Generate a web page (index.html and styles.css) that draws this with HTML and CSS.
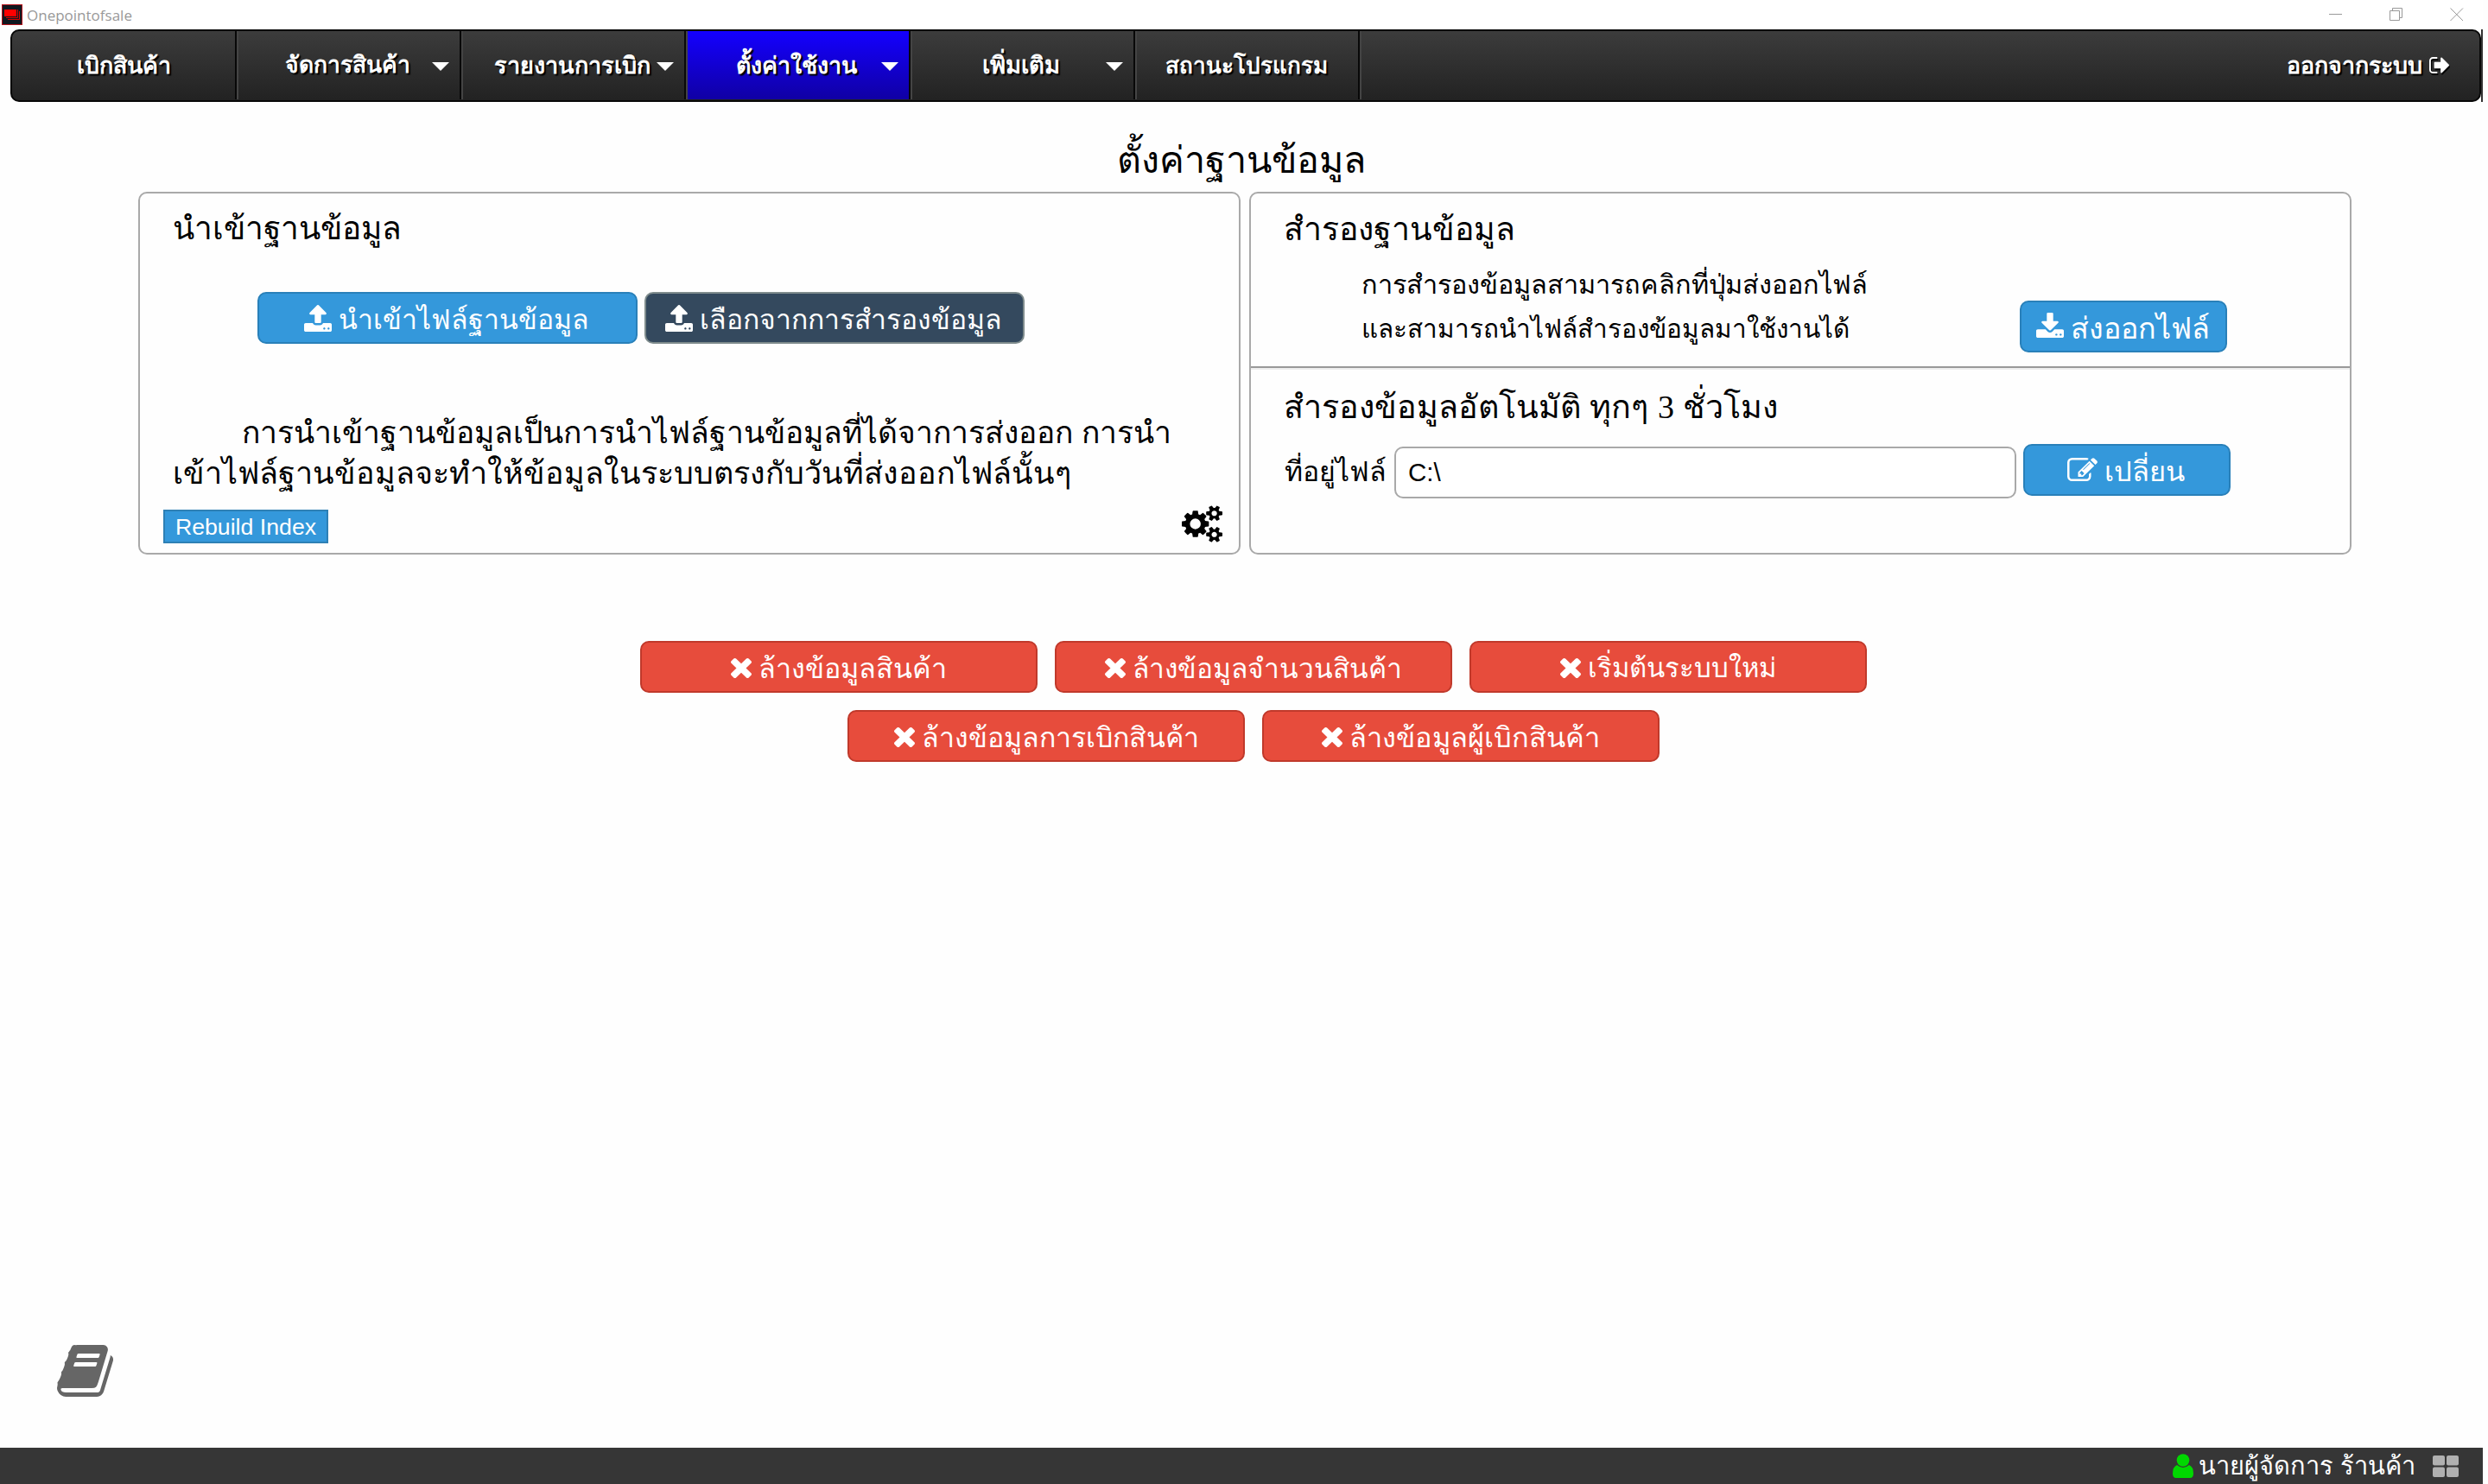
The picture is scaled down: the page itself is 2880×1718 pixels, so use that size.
FILE: index.html
```html
<!DOCTYPE html>
<html lang="th">
<head>
<meta charset="utf-8">
<title>Onepointofsale</title>
<link rel="stylesheet" href="styles.css">
</head>
<body>
<svg class="defs" aria-hidden="true">
  <symbol id="upload" viewBox="64 64 1664 1600" preserveAspectRatio="none"><path d="M1344 1472q0-26-19-45t-45-19-45 19-19 45 19 45 45 19 45-19 19-45zm256 0q0-26-19-45t-45-19-45 19-19 45 19 45 45 19 45-19 19-45zm128-224v320q0 40-28 68t-68 28h-1472q-40 0-68-28t-28-68v-320q0-40 28-68t68-28h427q21 56 70.500 92t110.500 36h256q61 0 110.500-36t70.500-92h427q40 0 68 28t28 68zm-325-648q-17 40-59 40h-256v448q0 26-19 45t-45 19h-256q-26 0-45-19t-19-45v-448h-256q-42 0-59-40-17-39 14-69l448-448q18-19 45-19t45 19l448 448q31 30 14 69z"/></symbol>
  <symbol id="download" viewBox="64 0 1664 1536" preserveAspectRatio="none"><path d="M1344 1344q0-26-19-45t-45-19-45 19-19 45 19 45 45 19 45-19 19-45zm256 0q0-26-19-45t-45-19-45 19-19 45 19 45 45 19 45-19 19-45zm128-224v320q0 40-28 68t-68 28h-1472q-40 0-68-28t-28-68v-320q0-40 28-68t68-28h465l135 136q58 56 136 56t136-56l136-136h464q40 0 68 28t28 68zm-325-569q17 41-14 70l-448 448q-18 19-45 19t-45-19l-448-448q-31-29-14-70 17-39 59-39h256v-448q0-26 19-45t45-19h256q26 0 45 19t19 45v448h256q42 0 59 39z"/></symbol>
  <symbol id="times" viewBox="302 366 1188 1188" preserveAspectRatio="none"><path d="M1490 1322q0 40-28 68l-136 136q-28 28-68 28t-68-28l-294-294-294 294q-28 28-68 28t-68-28l-136-136q-28-28-28-68t28-68l294-294-294-294q-28-28-28-68t28-68l136-136q28-28 68-28t68 28l294 294 294-294q28-28 68-28t68 28l136 136q28 28 28 68t-28 68l-294 294 294 294q28 28 28 68z"/></symbol>
  <symbol id="edit" viewBox="0 128 1792 1408" preserveAspectRatio="none"><path d="M888 1184l116-116-152-152-116 116v56h96v96h56zm440-720q-16-16-33 1l-350 350q-17 17-1 33t33-1l350-350q17-17 1-33zm80 594v190q0 119-84.500 203.500t-203.500 84.500h-832q-119 0-203.500-84.500t-84.500-203.500v-832q0-119 84.500-203.500t203.500-84.500h832q63 0 117 25 15 7 18 23 3 17-9 29l-49 49q-14 14-32 8-23-6-45-6h-832q-66 0-113 47t-47 113v832q0 66 47 113t113 47h832q66 0 113-47t47-113v-126q0-13 9-22l64-64q15-15 35-7t20 29zm-96-738l288 288-672 672h-288v-288zm444 132l-92 92-288-288 92-92q28-28 68-28t68 28l152 152q28 28 28 68t-28 68z"/></symbol>
  <symbol id="cogs" viewBox="-64 0 1920 1792" preserveAspectRatio="none"><path d="M832 896q0-106-75-181t-181-75-181 75-75 181 75 181 181 75 181-75 75-181zm768 512q0-52-38-90t-90-38-90 38-38 90q0 53 37.500 90.500t90.500 37.500 90.500-37.500 37.500-90.500zm0-1024q0-52-38-90t-90-38-90 38-38 90q0 53 37.500 90.500t90.500 37.500 90.500-37.500 37.500-90.500zm-384 421v185q0 10-7 19.500t-16 10.500l-155 24q-11 35-32 76 34 48 90 115 7 11 7 20 0 12-7 19-23 30-82.500 89.500t-78.500 59.500q-11 0-21-7l-115-90q-37 19-77 31-11 108-23 155-7 24-30 24h-186q-11 0-20-7.500t-10-17.500l-23-153q-34-10-75-31l-118 89q-7 7-20 7-11 0-21-8-144-133-144-160 0-9 7-19 10-14 41-53t47-61q-23-44-35-82l-152-24q-10-1-17-9.500t-7-19.500v-185q0-10 7-19.500t16-10.500l155-24q11-35 32-76-34-48-90-115-7-11-7-20 0-12 7-20 22-30 82-89t79-59q11 0 21 7l115 90q34-18 77-32 11-108 23-154 7-24 30-24h186q11 0 20 7.500t10 17.500l23 153q34 10 75 31l118-89q8-7 20-7 11 0 21 8 144 133 144 160 0 8-7 19-12 16-42 54t-45 60q23 48 34 82l152 23q10 2 17 10.500t7 19.500zm640 533v140q0 16-149 31-12 27-30 52 51 113 51 138 0 4-4 7-122 71-124 71-8 0-46-47t-52-68q-20 2-30 2t-30-2q-14 21-52 68t-46 47q-2 0-124-71-4-3-4-7 0-25 51-138-18-25-30-52-149-15-149-31v-140q0-16 149-31 13-29 30-52-51-113-51-138 0-4 4-7 4-2 35-20t59-34 30-16q8 0 46 46.500t52 67.500q20-2 30-2t30 2q51-71 92-112l6-2q4 0 124 70 4 3 4 7 0 25-51 138 17 23 30 52 149 15 149 31zm0-1024v140q0 16-149 31-12 27-30 52 51 113 51 138 0 4-4 7-122 71-124 71-8 0-46-47t-52-68q-20 2-30 2t-30-2q-14 21-52 68t-46 47q-2 0-124-71-4-3-4-7 0-25 51-138-18-25-30-52-149-15-149-31v-140q0-16 149-31 13-29 30-52-51-113-51-138 0-4 4-7 4-2 35-20t59-34 30-16q8 0 46 46.500t52 67.500q20-2 30-2t30 2q51-71 92-112l6-2q4 0 124 70 4 3 4 7 0 25-51 138 17 23 30 52 149 15 149 31z"/></symbol>
</svg>

<header class="titlebar">
  <svg class="app-icon" viewBox="0 0 24 24"><rect x=".5" y=".5" width="23" height="23" fill="#101820" stroke="#b3121a"/><path d="M7 17.500H20.500V8M5 15.500H18.500V6" fill="none" stroke="#d00"/><rect x="3" y="6" width="14" height="8" fill="#f00"/></svg>
  <span class="app-name">Onepointofsale</span>
  <svg class="win" viewBox="0 0 16 16"><path d="M0 7.500H15"/></svg>
  <svg class="win" viewBox="0 0 16 16"><path d="M.5 3.500H11.500V14.500H.5ZM3.500 3.500V.5H14.500V11.500H11.500"/></svg>
  <svg class="win" viewBox="0 0 16 16"><path d="M.5 .5L15 15M15 .5L.5 15"/></svg>
</header>

<div class="nav-wrap">
  <nav class="nav">
    <a class="item n1"><span>เบิกสินค้า</span></a>
    <a class="item n2 drop"><span>จัดการสินค้า</span><i></i></a>
    <a class="item n3 drop"><span>รายงานการเบิก</span><i></i></a>
    <a class="item n4 drop active"><span>ตั้งค่าใช้งาน</span><i></i></a>
    <a class="item n5 drop"><span>เพิ่มเติม</span><i></i></a>
    <a class="item n6"><span>สถานะโปรแกรม</span></a>
    <a class="logout"><span>ออกจากระบบ</span><svg viewBox="64 256 1568 1280" preserveAspectRatio="none"><path d="M704 1440q0 4 1 20t.5 26.500-3 23.500-10 19.500-20.500 6.500h-320q-119 0-203.500-84.500t-84.500-203.500v-704q0-119 84.500-203.500t203.500-84.500h320q13 0 22.500 9.500t9.500 22.500q0 4 1 20t.5 26.500-3 23.500-10 19.500-20.500 6.500h-320q-66 0-113 47t-47 113v704q0 66 47 113t113 47h312l11.500 1 11.500 3 8 5.500 7 9 2 13.500zm928-544q0 26-19 45l-544 544q-19 19-45 19t-45-19-19-45v-288h-448q-26 0-45-19t-19-45v-384q0-26 19-45t45-19h448v-288q0-26 19-45t45-19 45 19l544 544q19 19 19 45z"/></svg></a>
  </nav>
</div>

<main>
  <h1>ตั้งค่าฐานข้อมูล</h1>
  <div class="panels">
    <section class="panel">
      <h2 class="h-import">นำเข้าฐานข้อมูล</h2>
      <div class="import-buttons">
        <button class="btn blue"><svg class="up"><use href="#upload"/></svg><span>นำเข้าไฟล์ฐานข้อมูล</span></button>
        <button class="btn dark"><svg class="up"><use href="#upload"/></svg><span>เลือกจากการสำรองข้อมูล</span></button>
      </div>
      <p class="note"><span class="note-a">การนำเข้าฐานข้อมูลเป็นการนำไฟล์ฐานข้อมูลที่ได้จาการส่งออก การนำ</span><span class="note-b">เข้าไฟล์ฐานข้อมูลจะทำให้ข้อมูลในระบบตรงกับวันที่ส่งออกไฟล์นั้นๆ</span></p>
      <div class="tools">
        <button class="rebuild">Rebuild Index</button>
        <svg class="cogs"><use href="#cogs"/></svg>
      </div>
    </section>
    <section class="panel">
      <div class="backup">
        <h2 class="h-backup">สำรองฐานข้อมูล</h2>
        <div class="backup-row">
          <p><span class="line-a">การสำรองข้อมูลสามารถคลิกที่ปุ่มส่งออกไฟล์</span><span class="line-b">และสามารถนำไฟล์สำรองข้อมูลมาใช้งานได้</span></p>
          <button class="btn blue export"><svg class="down"><use href="#download"/></svg><span>ส่งออกไฟล์</span></button>
        </div>
      </div>
      <h2 class="h-auto">สำรองข้อมูลอัตโนมัติ ทุกๆ <b>3</b> ชั่วโมง</h2>
      <div class="path-row">
        <label for="path">ที่อยู่ไฟล์</label>
        <input id="path" type="text" value="C:\">
        <button class="btn blue change"><svg class="pen"><use href="#edit"/></svg><span>เปลี่ยน</span></button>
      </div>
    </section>
  </div>
  <div class="clear">
    <button class="btn red c1"><svg class="x"><use href="#times"/></svg><span>ล้างข้อมูลสินค้า</span></button>
    <button class="btn red c2"><svg class="x"><use href="#times"/></svg><span>ล้างข้อมูลจำนวนสินค้า</span></button>
    <button class="btn red c3"><svg class="x"><use href="#times"/></svg><span>เริ่มต้นระบบใหม่</span></button>
    <button class="btn red c4"><svg class="x"><use href="#times"/></svg><span>ล้างข้อมูลการเบิกสินค้า</span></button>
    <button class="btn red c5"><svg class="x"><use href="#times"/></svg><span>ล้างข้อมูลผู้เบิกสินค้า</span></button>
  </div>
  <svg class="book" viewBox="63 128 1664 1536" preserveAspectRatio="none"><path d="M1703 478q40 57 18 129l-275 906q-19 64-76.500 107.500t-122.500 43.500h-923q-77 0-148.500-53.500t-99.500-131.500q-24-67-2-127 0-4 3-27t4-37q1-8-3-21.500t-3-19.500q2-11 8-21t16.500-23.500 16.500-23.500q23-38 45-91.500t30-91.500q3-10 .5-30t-.5-28q3-11 17-28t17-23q21-36 42-92t25-90q1-9-2.500-32t.5-28q4-13 22-30.500t22-22.500q19-26 42.500-84.500t27.500-96.500q1-8-3-25.500t-2-26.500q2-8 9-18t18-23 17-21q8-12 16.500-30.500t15-35 16-36 19.500-32 26.500-23.500 36-11.500 47.500 5.500l-1 3q38-9 51-9h761q74 0 114 56t18 130l-274 906q-36 119-71.500 153.500t-128.500 34.500h-869q-27 0-38 15-11 16-1 43 24 70 144 70h923q29 0 56-15.500t35-41.500l300-987q7-22 5-57 38 15 59 43zm-1064 2q-4 13 2 22.500t20 9.500h608q13 0 25.500-9.500t16.500-22.500l21-64q4-13-2-22.500t-20-9.500h-608q-13 0-25.500 9.500t-16.500 22.500zm-83 256q-4 13 2 22.500t20 9.500h608q13 0 25.500-9.500t16.500-22.500l21-64q4-13-2-22.500t-20-9.500h-608q-13 0-25.500 9.500t-16.500 22.500z"/></svg>
</main>

<footer class="status">
  <svg class="user" viewBox="0 0 24 28"><path d="M5 13Q12 19 19 13Q24 15 24 23Q24 28 20 28H4Q0 28 0 23Q0 15 5 13Z"/><circle cx="12" cy="7.500" r="7.300"/></svg>
  <span>นายผู้จัดการ ร้านค้า</span>
  <svg class="grid" viewBox="0 0 30 25"><rect width="14" height="11.500" rx="2"/><rect x="16" width="14" height="11.500" rx="2"/><rect y="13.500" width="14" height="11.500" rx="2"/><rect x="16" y="13.500" width="14" height="11.500" rx="2"/></svg>
</footer>
</body>
</html>
```
FILE: styles.css
```css
* { box-sizing: border-box; }

body {
  margin: 0;
  width: 2874px;
  height: 1718px;
  display: flex;
  flex-direction: column;
  background: #fefefe;
  color: #000;
  font-family: "Liberation Sans", sans-serif;
  overflow: hidden;
}

h1, h2, p { margin: 0; font-weight: 400; }
span, label { white-space: nowrap; }
button, input { font-family: inherit; margin: 0; }
.defs { position: absolute; width: 0; height: 0; }

/* window title bar */
.titlebar {
  height: 34px;
  padding: 5px 22px 0 2px;
  display: flex;
  align-items: flex-start;
  background: #fff;
}
.app-icon { width: 24px; height: 24px; }
.app-name {
  flex: 1;
  margin-left: 5px;
  font: 17px/25px "Open Sans", sans-serif;
  color: #999;
}
.win { width: 16px; height: 16px; margin: 4px 0 0 54px; fill: none; stroke: #999; }

/* navigation */
.nav-wrap { width: 2862px; height: 84px; margin-left: 12px; border-right: 2px solid #333; }
.nav {
  height: 84px;
  display: flex;
  border: 2px solid #080808;
  border-radius: 10px;
  background: linear-gradient(#3c3c3c, #222);
  color: #fff;
  font-size: 26.900px;
  font-weight: 700;
  text-shadow: 2px 2px 1px #000;
  overflow: hidden;
}
.item {
  width: 260px;
  height: 79px;
  display: flex;
  align-items: center;
  justify-content: center;
  padding: 0 2px 1px 0;
  border-left: 2px solid #444;
  border-right: 2px solid #080808;
}
.item:first-child { border-left-color: transparent; }
.item.drop { padding-left: 32px; padding-right: 12px; }
.item.drop span { flex: 1; text-align: center; }
.item i {
  width: 20px;
  height: 10px;
  margin: 4px 0 0 4px;
  background: #fff;
  clip-path: polygon(0 0, 100% 0, 50% 100%);
}
.n2 { font-size: 26.500px; }
.n3 { font-size: 27.100px; }
.n5 { font-size: 27.500px; }
.n6 { font-size: 26.100px; }
.active { background: linear-gradient(#1400ff, #1000a4); }
.logout {
  flex: 1;
  height: 79px;
  display: flex;
  align-items: center;
  justify-content: flex-end;
  gap: 8px;
  padding: 0 35px 1px 0;
  border-left: 2px solid #444;
}
.logout svg { width: 23px; height: 19px; fill: #fff; filter: drop-shadow(1px 2px 0 #000); }

main { flex: 1; display: flex; flex-direction: column; }
h1 { margin-top: 37px; font-size: 43.100px; line-height: 60px; text-align: center; }

/* settings panels */
.panels { display: flex; gap: 10px; margin: 7px 0 0 160px; }
.panel { width: 1276px; height: 420px; border: 2px solid #a9a9a9; border-radius: 10px; }
h2 { padding: 16px 0 0 38px; line-height: 50px; }
.h-import { font-size: 37px; }
.h-backup { font-size: 37.400px; }

.btn {
  width: 240px;
  height: 60px;
  padding: 3px 2px 0 0;
  display: flex;
  align-items: center;
  justify-content: center;
  gap: 8px;
  border: 2px solid;
  border-radius: 10px;
  color: #fff;
  font-size: 31.900px;
  line-height: 50px;
}
.btn svg { fill: #fff; flex: none; }
.blue { background: #3498db; border-color: #2980b9; }
.dark { background: #34495e; border-color: #7f8c8d; }
.red { width: 460px; padding-right: 0; background: #e74c3c; border-color: #c0392b; }
.up { width: 32px; height: 31px; margin-bottom: 3px; }
.down { width: 32px; height: 29px; margin-bottom: 6px; }
.pen { width: 35px; height: 27px; margin-bottom: 4px; }
.x { width: 24px; height: 23px; }

.import-buttons { display: flex; gap: 8px; margin: 48px 0 0 136px; }
.import-buttons .btn { width: 440px; }
.note { margin-top: 80px; padding-left: 38px; line-height: 47px; }
.note span { display: block; }
.note-a { padding-left: 80px; font-size: 35.400px; }
.note-b { font-size: 35.900px; }
.tools { display: flex; justify-content: space-between; align-items: flex-start; padding: 13px 19px 0 27px; }
.rebuild {
  width: 191px;
  height: 39px;
  margin-top: 5px;
  padding: 0;
  border: 2px solid #2e80b5;
  background: #3498db;
  color: #fff;
  font-size: 26.700px;
  line-height: 34px;
}
.cogs { width: 47px; height: 43px; }

.backup { height: 204px; border-bottom: 2px solid #eee; box-shadow: inset 0 -2px #999; }
.backup-row { display: flex; justify-content: space-between; padding: 14px 142px 0 128px; line-height: 51px; }
.backup-row span { display: block; }
.backup-row .btn { margin-top: 44px; font-size: 34.100px; }
.backup-row .btn span, .change span { line-height: 50px; }
.line-a { font-size: 30.700px; }
.line-b { font-size: 29.700px; }
.h-auto { padding-top: 18px; font-size: 37.700px; }
.h-auto b { font: 400 38px/40px "Liberation Serif", serif; }
.path-row { display: flex; align-items: flex-start; padding: 18px 0 0 39px; }
.path-row label { width: 127px; font-size: 32px; line-height: 64px; }
.path-row input {
  width: 720px;
  height: 60px;
  margin: 3px 8px 0 0;
  padding: 0 14px;
  border: 2px solid #a9a9a9;
  border-radius: 10px;
  background: #fff;
  font-size: 29.500px;
}
.change { font-size: 32.600px; }

/* data clearing buttons */
.clear { width: 1420px; margin: 100px 0 0 741px; display: flex; flex-wrap: wrap; justify-content: center; gap: 20px; }
.c1 { font-size: 32.300px; }
.c2 { font-size: 31.700px; }
.c3 { font-size: 31.100px; }
.c4 { font-size: 32.100px; }
.c5 { font-size: 32.600px; }

.book { width: 65px; height: 60px; margin: auto 0 59px 66px; fill: #666; }

/* status bar */
.status {
  height: 42px;
  padding-right: 28px;
  display: flex;
  align-items: center;
  justify-content: flex-end;
  background: #363636;
  color: #fff;
  font-size: 29px;
  line-height: 42px;
}
.user { width: 24px; height: 28px; margin-right: 6px; fill: #00d800; }
.grid { width: 30px; height: 25px; margin-left: 20px; fill: #b0b0b0; }
```
